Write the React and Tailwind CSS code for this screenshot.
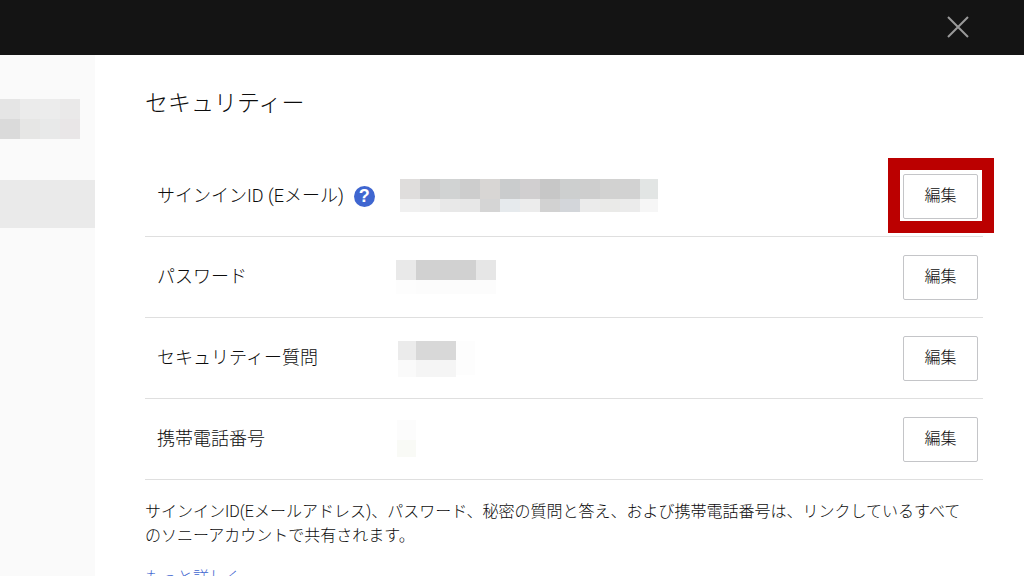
import React from 'react';

// Redacted values are drawn as mosaics: [x, y, width, height, color]
const rows = [
  {
    id: 'signin',
    label: 'サインインID (Eメール)',
    help: true,
    highlighted: true,
    mosaic: [
      [4, 3, 20, 20, '#dfdddc'], [24, 3, 20, 20, '#cdcdcd'], [44, 3, 20, 20, '#d1d3d3'],
      [64, 3, 20, 20, '#cdcdcd'], [84, 3, 20, 20, '#d8d6d4'], [104, 3, 20, 20, '#cacccd'],
      [124, 3, 20, 20, '#d1cfd0'], [144, 3, 20, 20, '#c7c7c7'], [164, 3, 20, 20, '#cdcfcf'],
      [184, 3, 20, 20, '#cecece'], [204, 3, 20, 20, '#d2d2d1'], [224, 3, 20, 20, '#d2d2d2'],
      [244, 3, 18, 20, '#e2e5e4'],
      [4, 23, 20, 13, '#f0f0f0'], [24, 23, 20, 13, '#eeeeee'], [44, 23, 20, 13, '#e8e8e8'],
      [64, 23, 20, 13, '#e7e7e7'], [84, 23, 20, 13, '#d5d5d5'], [104, 23, 20, 13, '#e6eaed'],
      [124, 23, 20, 13, '#ececec'], [144, 23, 20, 13, '#d2d2d2'], [164, 23, 20, 13, '#d3d6da'],
      [184, 23, 20, 13, '#ebebeb'], [204, 23, 20, 13, '#eaeae8'], [224, 23, 20, 13, '#ebebeb'],
      [244, 23, 18, 13, '#f6f6f6'],
    ],
  },
  {
    id: 'password',
    label: 'パスワード',
    mosaic: [
      [0, 3, 20, 20, '#e9e9e9'], [20, 3, 60, 20, '#d1d1d1'], [80, 3, 20, 20, '#e6e6e6'],
      [0, 23, 20, 14, '#fdfdfd'], [20, 23, 80, 14, '#fcfcfc'],
    ],
  },
  {
    id: 'question',
    label: 'セキュリティー質問',
    mosaic: [
      [2, 3, 18, 19, '#ebebeb'], [20, 3, 40, 19, '#d8d8d8'], [60, 3, 19, 34, '#fdfdfd'],
      [2, 22, 18, 17, '#fafafa'], [20, 22, 40, 17, '#f5f5f5'],
    ],
  },
  {
    id: 'phone',
    label: '携帯電話番号',
    mosaic: [
      [1, 1, 19, 20, '#fcfcfc'], [1, 21, 19, 17, '#f9faf6'],
    ],
  },
];

const profileMosaic = [
  [0, 0, 20, 20, '#e5e5e5'], [20, 0, 20, 20, '#ebebeb'], [40, 0, 20, 20, '#ececec'], [60, 0, 20, 20, '#eae9e9'],
  [0, 20, 20, 20, '#dadada'], [20, 20, 20, 20, '#e6e6e5'], [40, 20, 20, 20, '#e8e9e9'], [60, 20, 20, 20, '#e9e6e7'],
];

const Mosaic = ({ cells, className }) => (
  <svg height="40" className={className} shapeRendering="crispEdges" aria-hidden="true">
    {cells.map(([x, y, w, h, color], index) => (
      <rect key={index} x={x} y={y} width={w} height={h} fill={color} />
    ))}
  </svg>
);

const HelpButton = () => (
  <button type="button" aria-label="ヘルプ" className="ml-2.5 flex size-[21px] shrink-0 items-center justify-center rounded-full bg-[#3f66d0] font-['Liberation_Sans',sans-serif] text-lg font-bold leading-none text-white">
    ?
  </button>
);

const SettingRow = ({ row }) => (
  <li className="flex h-[81px] items-center border-b border-[#dfdfdf] pl-3 pr-[5px]">
    <div className="flex w-[239px] shrink-0 items-center">
      <span id={row.id} className="whitespace-nowrap text-lg leading-6">{row.label}</span>
      {row.help && <HelpButton />}
    </div>
    <Mosaic cells={row.mosaic} className="w-[262px] shrink-0" />
    <div className="relative ml-auto">
      <button type="button" aria-describedby={row.id} className="block h-[45px] w-[75px] rounded-xs border border-[#c4c5c8] bg-white text-base">
        編集
      </button>
      {row.highlighted && (
        <div className="pointer-events-none absolute -bottom-3.5 -left-[15px] -right-4 -top-4 border-12 border-[#bb0000]"></div>
      )}
    </div>
  </li>
);

const App = () => {
  return (
    <div className="flex min-h-screen flex-col bg-white font-['Roboto','Noto_Sans_CJK_JP',sans-serif] font-light text-[#0c0c0c]">
      <header className="flex h-[55px] shrink-0 items-center justify-end bg-[#141414] pb-px pr-[55px]">
        <button type="button" aria-label="閉じる">
          <svg width="22" height="22" viewBox="0 0 22 22" fill="none" stroke="#9a9a9a" strokeWidth="2" className="block">
            <path d="M1 1 21 21M21 1 1 21" />
          </svg>
        </button>
      </header>

      <div className="flex flex-1">
        {/* Sidebar */}
        <aside className="w-[95px] shrink-0 bg-[#fafafa] pt-11">
          <Mosaic cells={profileMosaic} className="w-20" />
          <div className="mt-[41px] h-12 bg-[#eaeaea]"></div>
        </aside>

        {/* Security settings */}
        <main className="min-w-0 flex-1 pl-[50px] pr-[41px] pt-[33px]">
          <h1 className="text-[23px] leading-8">セキュリティー</h1>

          <ul className="mt-9">
            {rows.map((row) => (
              <SettingRow key={row.id} row={row} />
            ))}
          </ul>

          <p className="mt-5 pr-4 text-base leading-6">
            サインインID(Eメールアドレス)、パスワード、秘密の質問と答え、および携帯電話番号は、リンクしているすべてのソニーアカウントで共有されます。
          </p>
          <a href="#more" className="mt-[18px] inline-block text-base leading-6 text-[#3f66d0]">もっと詳しく</a>
        </main>
      </div>
    </div>
  );
};

export default App;
